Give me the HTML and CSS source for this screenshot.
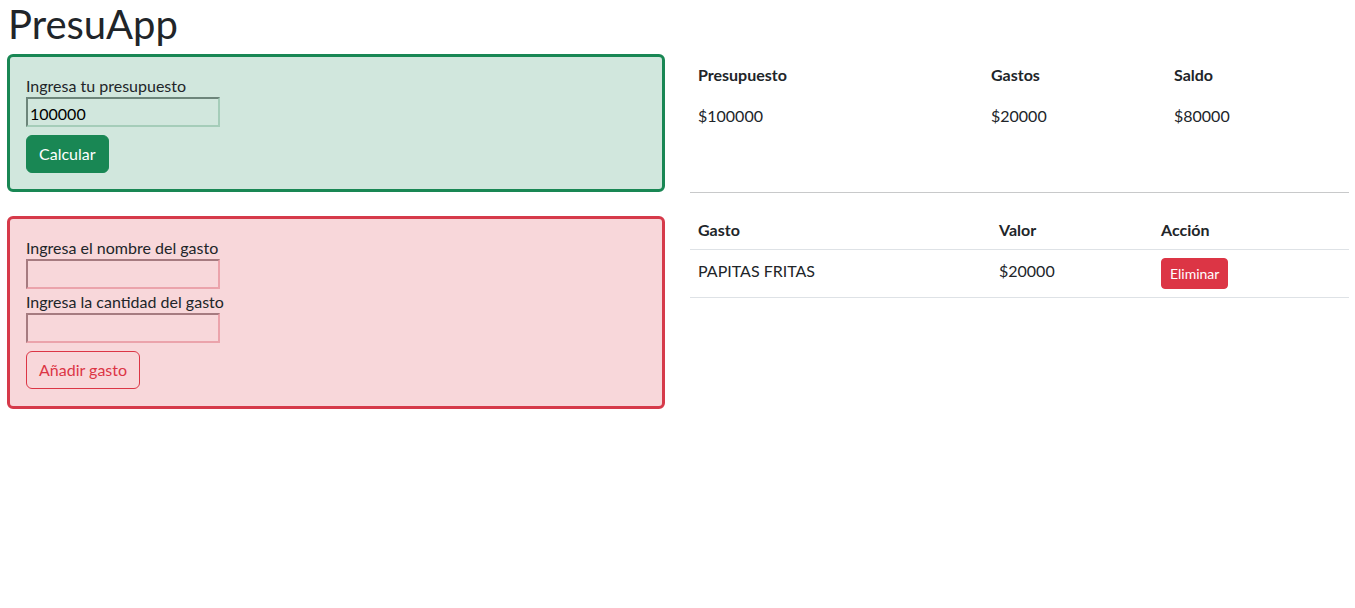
FILE: index.html
```html
<!DOCTYPE html>
<html lang="es">
<head>
<meta charset="utf-8">
<title>PresuApp</title>
<link rel="stylesheet" href="styles.css">
</head>
<body>
<div class="page">
  <h1 class="title">PresuApp</h1>
  <div class="layout">
    <div class="left">
      <form class="box box-success">
        <label class="lbl">Ingresa tu presupuesto</label>
        <input class="inp inp-success" type="text" value="100000">
        <button type="button" class="btn btn-success">Calcular</button>
      </form>
      <form class="box box-danger">
        <label class="lbl">Ingresa el nombre del gasto</label>
        <input class="inp inp-danger" type="text">
        <label class="lbl">Ingresa la cantidad del gasto</label>
        <input class="inp inp-danger" type="text">
        <button type="button" class="btn btn-outline-danger">Añadir gasto</button>
      </form>
    </div>
    <div class="right">
      <table class="tbl tbl-summary">
        <thead>
          <tr><th class="c1">Presupuesto</th><th class="c2">Gastos</th><th>Saldo</th></tr>
        </thead>
        <tbody>
          <tr><td>$100000</td><td>$20000</td><td>$80000</td></tr>
        </tbody>
      </table>
      <hr class="sep">
      <table class="tbl tbl-list">
        <thead>
          <tr><th class="d1">Gasto</th><th class="d2">Valor</th><th>Acción</th></tr>
        </thead>
        <tbody>
          <tr><td>PAPITAS FRITAS</td><td>$20000</td><td class="act"><button type="button" class="btn btn-sm btn-danger">Eliminar</button></td></tr>
        </tbody>
      </table>
    </div>
  </div>
</div>
</body>
</html>
```
FILE: styles.css
```css
* { box-sizing: border-box; }
html, body { margin: 0; padding: 0; background: #fff; }
body {
  font-family: Lato, "Liberation Sans", sans-serif;
  font-size: 16px;
  line-height: 24px;
  color: #212529;
}
.page { padding: 0 6px 0 7px; }
.title {
  margin: 0;
  padding-left: 1px;
  font-size: 40px;
  line-height: 48px;
  font-weight: 400;
}
.layout {
  display: flex;
  gap: 25px;
  margin-top: 6px;
}
.left {
  width: 658px;
  flex: none;
  display: flex;
  flex-direction: column;
  gap: 24px;
}
.right { flex: 1; }
.box {
  margin: 0;
  border: 3px solid;
  border-radius: 6px;
  padding: 16px;
  display: flex;
  flex-direction: column;
  align-items: flex-start;
}
.box-success { background: #d1e7dd; border-color: #198754; }
.box-danger { background: #f8d7da; border-color: #d63a4a; padding-bottom: 17px; }
.lbl { display: block; line-height: 23px; padding-top: 1px; }
.inp {
  width: 194px;
  height: 30px;
  padding: 2px 2px 0;
  font: inherit;
  font-size: 16px;
  line-height: 24px;
  color: #000;
  background: transparent;
  border: 2px solid;
  outline: none;
}
.inp-success {
  border-color: #6d857a #a5cdb9 #a5cdb9 #6d857a;
}
.inp-danger {
  border-color: #a67b80 #eba3ab #eba3ab #a67b80;
}
.btn {
  margin-top: 8px;
  font: inherit;
  font-size: 16px;
  line-height: 24px;
  padding: 6px 12px;
  border: 1px solid transparent;
  border-radius: 6px;
  cursor: pointer;
}
.btn-success { background: #198754; border-color: #198754; color: #fff; }
.btn-outline-danger { background: transparent; border-color: #dc3545; color: #dc3545; }
.btn-sm {
  margin-top: 0;
  font-size: 14px;
  line-height: 21px;
  padding: 4px 8px;
  border-radius: 4px;
}
.btn-danger { background: #dc3545; border-color: #dc3545; color: #fff; }
.tbl {
  width: 100%;
  border-collapse: collapse;
}
.tbl th, .tbl td {
  text-align: left;
  padding: 9px 8px 7px;
  vertical-align: top;
  border-bottom: 1px solid transparent;
}
.tbl th { font-weight: 700; }
.tbl-summary .c1 { width: 293px; }
.tbl-summary .c2 { width: 183px; }
.tbl-list th, .tbl-list td { border-bottom-color: #dee2e6; }
.tbl-list .act { padding-top: 8px; padding-bottom: 8px; }
.tbl-list .d1 { width: 301px; }
.tbl-list .d2 { width: 162px; }
.sep {
  margin: 56px 0 16px;
  border: 0;
  border-top: 1px solid #c8c9ca;
  height: 0;
}
```
